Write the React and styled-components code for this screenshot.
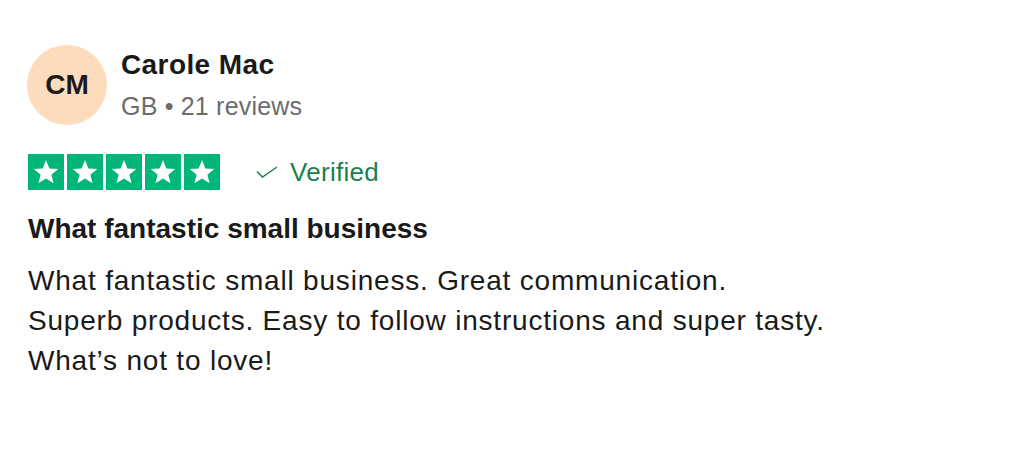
import React from 'react';
import styled, { createGlobalStyle } from 'styled-components';

const GlobalStyle = createGlobalStyle`
  html, body {
    margin: 0;
    padding: 0;
    background: #ffffff;
  }
  body {
    font-family: "Liberation Sans", Arial, Helvetica, sans-serif;
    color: #1a1a1a;
  }
`;

const Card = styled.article`
  width: 1011px;
  height: 456px;
  box-sizing: border-box;
  padding: 45px 0 0 27px;
  background: #fff;
`;

const Header = styled.div`
  display: flex;
  align-items: flex-start;
  gap: 14px;
`;

const Avatar = styled.div`
  width: 80px;
  height: 80px;
  border-radius: 50%;
  background: #fddcbd;
  display: flex;
  align-items: center;
  justify-content: center;
  font-weight: 700;
  font-size: 28px;
  color: #1a1a1a;
`;

const Info = styled.div`
  display: flex;
  flex-direction: column;
  gap: 10px;
  padding-top: 4px;
`;

const Name = styled.div`
  font-size: 28px;
  font-weight: 700;
  line-height: 32px;
  letter-spacing: 0.4px;
  color: #1a1a1a;
`;

const Meta = styled.div`
  font-size: 25px;
  line-height: 30px;
  letter-spacing: 0.2px;
  color: #6c6c6c;
`;

const RatingRow = styled.div`
  display: flex;
  align-items: center;
  margin-top: 29px;
  padding-left: 1px;
`;

const Stars = styled.div`
  display: flex;
  gap: 3px;
`;

const StarBox = styled.div`
  width: 36px;
  height: 36px;
  background: ${p => p.$on ? '#00b67a' : '#dcdce6'};
  display: flex;
  align-items: center;
  justify-content: center;
`;

const Verified = styled.div`
  display: flex;
  align-items: center;
  gap: 12px;
  margin-left: 36px;
  font-size: 26px;
  letter-spacing: 0.3px;
  color: #1b7f50;
`;

const Title = styled.h2`
  margin: 23px 0 0 1px;
  font-size: 28px;
  line-height: 32px;
  font-weight: 700;
  color: #1a1a1a;
`;

const Body = styled.p`
  margin: 16px 0 0 1px;
  font-size: 28px;
  line-height: 40px;
  letter-spacing: 0.8px;
  color: #1a1a1a;
`;

const Star = () => (
  <svg width="28" height="28" viewBox="0 0 24 24">
    <path
      fill="#fff"
      d="M12 1.8l2.9 7.1 7.6.5-5.9 4.9 1.9 7.4L12 17.6l-6.5 4.1 1.9-7.4-5.9-4.9 7.6-.5z"
    />
  </svg>
);

const Check = () => (
  <svg width="22" height="12" viewBox="0 0 22 12" fill="none">
    <path d="M1 5.5l5.5 5.5L21 1" stroke="#1b7f50" strokeWidth="1.4" />
  </svg>
);

const App = () => {
  const stars = [1, 2, 3, 4, 5];
  return (
    <>
      <GlobalStyle />
      <Card>
        <Header>
          <Avatar>CM</Avatar>
          <Info>
            <Name>Carole Mac</Name>
            <Meta>GB • 21 reviews</Meta>
          </Info>
        </Header>
        <RatingRow>
          <Stars>
            {stars.map(n => (
              <StarBox key={n} $on>
                <Star />
              </StarBox>
            ))}
          </Stars>
          <Verified>
            <Check />
            Verified
          </Verified>
        </RatingRow>
        <Title>What fantastic small business</Title>
        <Body>
          What fantastic small business. Great communication.
          <br />
          Superb products. Easy to follow instructions and super tasty.
          <br />
          What’s not to love!
        </Body>
      </Card>
    </>
  );
};

export default App;
